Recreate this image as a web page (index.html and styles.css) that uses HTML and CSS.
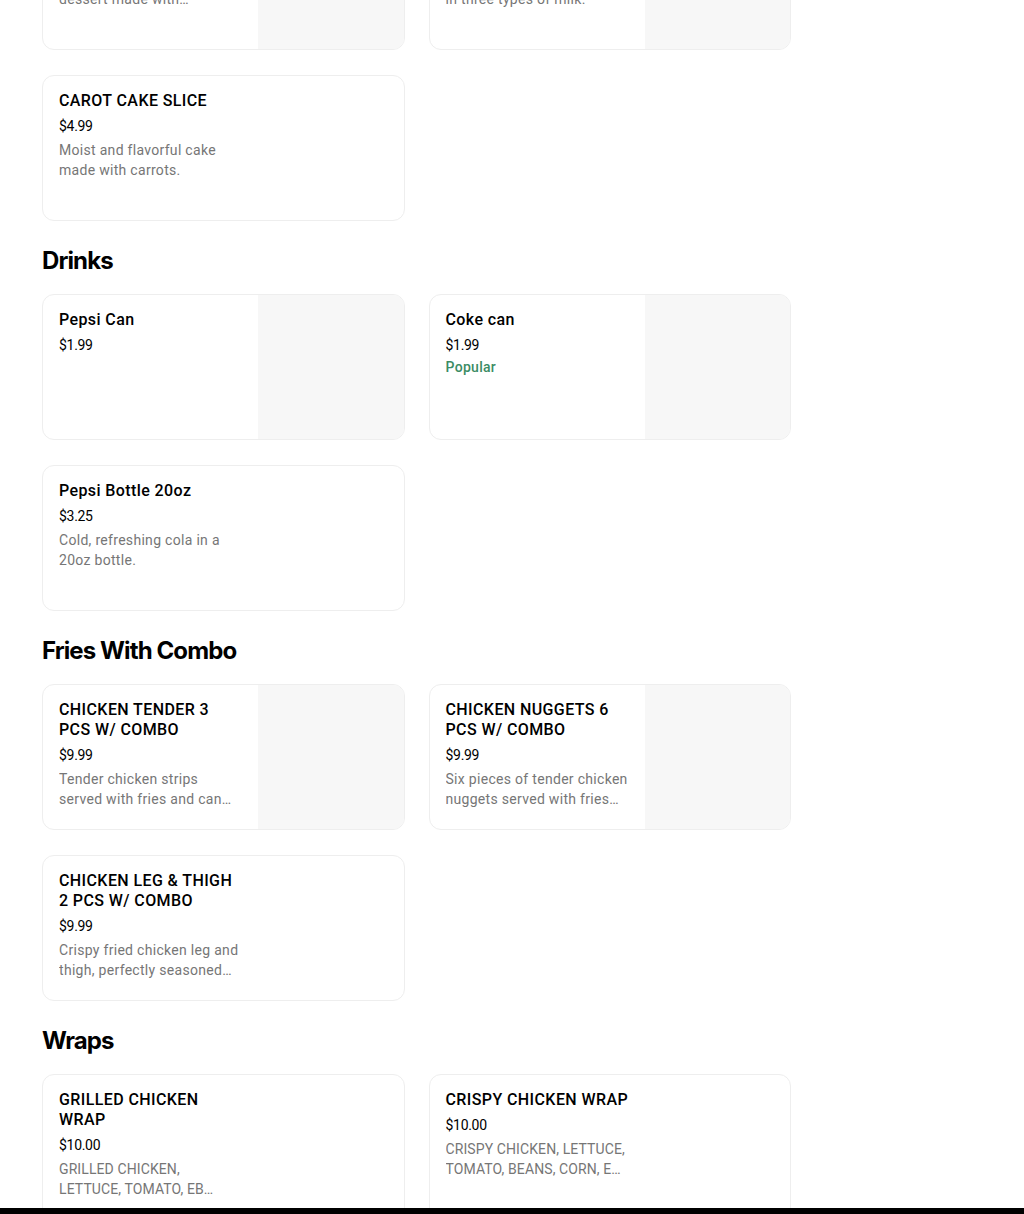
FILE: index.html
```html
<!DOCTYPE html>
<html lang="en">
<head>
    <meta charset="UTF-8">
    <meta name="viewport" content="width=device-width, initial-scale=1.0">
    <title>Menu</title>
    <link rel="stylesheet" href="styles.css">
</head>
<body>
    <main class="menu">
        <!-- Desserts -->
        <section class="menu-section">
            <h2>Desserts</h2>
            <div class="item-grid">
                <div class="item-card">
                    <div class="item-info">
                        <h3>FLAN</h3>
                        <div class="item-price">$4.99</div>
                        <p class="item-desc">Creamy caramel custard dessert made with caramelized sugar and eggs.</p>
                    </div>
                    <div class="item-image"></div>
                </div>
                <div class="item-card">
                    <div class="item-info">
                        <h3>TRES LECHES</h3>
                        <div class="item-price">$5.99</div>
                        <p class="item-desc">Fluffy sponge cake soaked in three types of milk.</p>
                    </div>
                    <div class="item-image"></div>
                </div>
                <div class="item-card">
                    <div class="item-info">
                        <h3>CAROT CAKE SLICE</h3>
                        <div class="item-price">$4.99</div>
                        <p class="item-desc">Moist and flavorful cake made with carrots.</p>
                    </div>
                </div>
            </div>
        </section>

        <!-- Drinks -->
        <section class="menu-section">
            <h2>Drinks</h2>
            <div class="item-grid">
                <div class="item-card">
                    <div class="item-info">
                        <h3>Pepsi Can</h3>
                        <div class="item-price">$1.99</div>
                    </div>
                    <div class="item-image"></div>
                </div>
                <div class="item-card">
                    <div class="item-info">
                        <h3>Coke can</h3>
                        <div class="item-price">$1.99</div>
                        <div class="item-tag">Popular</div>
                    </div>
                    <div class="item-image"></div>
                </div>
                <div class="item-card">
                    <div class="item-info">
                        <h3>Pepsi Bottle 20oz</h3>
                        <div class="item-price">$3.25</div>
                        <p class="item-desc">Cold, refreshing cola in a 20oz bottle.</p>
                    </div>
                </div>
            </div>
        </section>

        <!-- Fries With Combo -->
        <section class="menu-section">
            <h2>Fries With Combo</h2>
            <div class="item-grid">
                <div class="item-card">
                    <div class="item-info">
                        <h3>CHICKEN TENDER 3 PCS W/ COMBO</h3>
                        <div class="item-price">$9.99</div>
                        <p class="item-desc">Tender chicken strips served with fries and can soda.</p>
                    </div>
                    <div class="item-image"></div>
                </div>
                <div class="item-card">
                    <div class="item-info">
                        <h3>CHICKEN NUGGETS 6 PCS W/ COMBO</h3>
                        <div class="item-price">$9.99</div>
                        <p class="item-desc">Six pieces of tender chicken nuggets served with fries and can soda.</p>
                    </div>
                    <div class="item-image"></div>
                </div>
                <div class="item-card">
                    <div class="item-info">
                        <h3>CHICKEN LEG &amp; THIGH 2 PCS W/ COMBO</h3>
                        <div class="item-price">$9.99</div>
                        <p class="item-desc">Crispy fried chicken leg and thigh, perfectly seasoned and served with fries.</p>
                    </div>
                </div>
            </div>
        </section>

        <!-- Wraps -->
        <section class="menu-section">
            <h2>Wraps</h2>
            <div class="item-grid">
                <div class="item-card">
                    <div class="item-info">
                        <h3>GRILLED CHICKEN WRAP</h3>
                        <div class="item-price">$10.00</div>
                        <p class="item-desc upper">GRILLED CHICKEN, LETTUCE, TOMATO, EB CHEESE, CORN, SAUCE</p>
                    </div>
                </div>
                <div class="item-card">
                    <div class="item-info">
                        <h3>CRISPY CHICKEN WRAP</h3>
                        <div class="item-price">$10.00</div>
                        <p class="item-desc upper">CRISPY CHICKEN, LETTUCE, TOMATO, BEANS, CORN, EB CHEESE, SAUCE</p>
                    </div>
                </div>
            </div>
        </section>
    </main>

    <div class="bottom-bar"></div>
</body>
</html>
```

FILE: styles.css
```css
body {
    font-family: 'Roboto', 'Liberation Sans', sans-serif;
    background-color: #ffffff;
    color: #000000;
    margin: 0;
    padding: 0;
}
.menu {
    margin-top: -169px;
    padding-left: 42px;
    width: 749px;
}
.menu-section h2 {
    font-family: 'Inter', 'Liberation Sans', sans-serif;
    font-size: 24px;
    line-height: 32px;
    font-weight: 700;
    letter-spacing: -0.9px;
    margin: 24px 0 17px 0;
}
.item-grid {
    display: grid;
    grid-template-columns: repeat(2, 1fr);
    column-gap: 24px;
    row-gap: 25px;
}
.item-card {
    display: flex;
    height: 146px;
    box-sizing: border-box;
    border: 1px solid #eeeeee;
    border-radius: 12px;
    overflow: hidden;
}
.item-info {
    flex: 0 0 215px;
    box-sizing: border-box;
    padding: 15px 16px 0 16px;
}
.item-info h3 {
    font-size: 16px;
    line-height: 20px;
    font-weight: 500;
    letter-spacing: 0.4px;
    margin: 0;
}
.item-price {
    font-size: 14px;
    line-height: 18px;
    letter-spacing: -0.3px;
    margin-top: 6px;
}
.item-tag {
    font-size: 14px;
    line-height: 20px;
    font-weight: 500;
    letter-spacing: 0.3px;
    color: #3b8c64;
    margin-top: 3px;
}
.item-desc {
    font-size: 14px;
    line-height: 20px;
    letter-spacing: 0.3px;
    color: #767676;
    margin: 5px 0 0 0;
    display: -webkit-box;
    -webkit-line-clamp: 2;
    -webkit-box-orient: vertical;
    overflow: hidden;
}
.item-desc.upper {
    letter-spacing: 0.1px;
}
.item-image {
    flex: 1;
    background-color: #f7f7f7;
}
.bottom-bar {
    position: fixed;
    left: 0;
    right: 0;
    bottom: 0;
    height: 6px;
    background-color: #000000;
}
```
